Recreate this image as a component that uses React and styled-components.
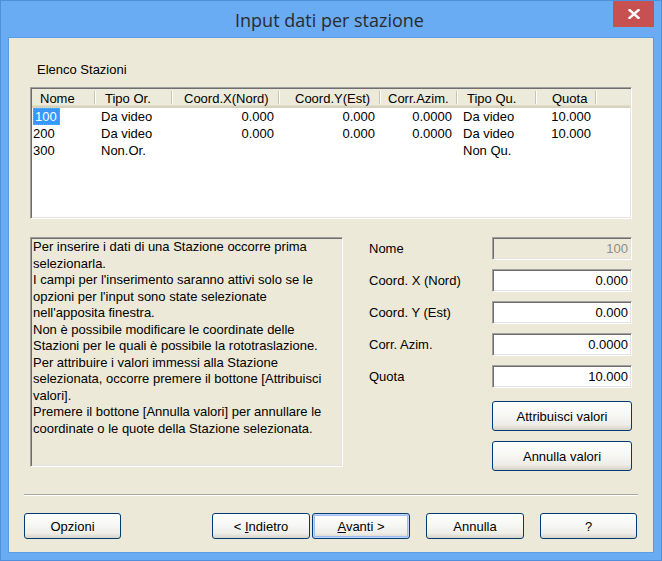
import React from "react";
import styled, { createGlobalStyle, css } from "styled-components";

const GlobalStyle = createGlobalStyle`
  html, body { margin: 0; padding: 0; background: #6aacf4; }
  * { box-sizing: border-box; }
`;

const FONT = `"Liberation Sans", Arial, sans-serif`;
const BEIGE = "#ece9d8";

const Window = styled.div`
  width: 662px;
  height: 561px;
  border: 1px solid #4f8fdb;
  background: #6aacf4;
  display: flex;
  flex-direction: column;
  font-family: ${FONT};
  font-size: 13px;
  color: #000;
`;

const TitleBar = styled.div`
  height: 36px;
  display: grid;
  grid-template-columns: 1fr auto 1fr;
  align-items: start;
  padding-right: 7px;
`;

const Title = styled.div`
  grid-column: 2;
  font-family: "Open Sans", "Noto Sans", sans-serif;
  font-size: 18px;
  line-height: 24px;
  margin-top: 7px;
  margin-left: 4px;
  color: #2b2b2b;
  white-space: nowrap;
`;

const CloseButton = styled.div`
  grid-column: 3;
  justify-self: end;
  width: 41px;
  height: 26px;
  background: #c75050;
  display: flex;
  align-items: center;
  justify-content: center;
`;

const Client = styled.div`
  flex: 1;
  margin: 0 7px 7px 7px;
  border: 1px solid #5b9be4;
  background: ${BEIGE};
  display: flex;
  flex-direction: column;
  padding-bottom: 13px;
`;

const SectionLabel = styled.div`
  margin: 24px 0 10px 28px;
  line-height: 15px;
`;

const ListView = styled.div`
  margin-left: 21px;
  width: 602px;
  height: 132px;
  background: #fff;
  border-style: solid;
  border-width: 1px;
  border-color: #a0a0a0 #ffffff #ffffff #a0a0a0;
  box-shadow: inset 1px 1px 0 #6e6e6e, inset -1px -1px 0 #e3e3e3;
  padding: 1px;
  display: flex;
  flex-direction: column;
`;

const HeaderRow = styled.div`
  display: flex;
  background: #ebeadb;
  padding-top: 2px;
  height: 19px;
  border-bottom: 2px solid #d6d2bd;
  box-shadow: 0 -1px 0 #e2dec9 inset;
`;

const HeaderCell = styled.div`
  position: relative;
  width: ${(p) => p.$w}px;
  flex: none;
  padding-left: ${(p) => p.$pad}px;
  line-height: 15px;
  white-space: nowrap;
  &::after {
    content: "";
    position: absolute;
    right: 0;
    top: 0;
    width: 1px;
    height: 13px;
    background: #c7c5b2;
    box-shadow: 1px 0 0 #fff;
  }
`;

const Row = styled.div`
  display: flex;
  height: 17px;
  line-height: 17px;
`;

const Cell = styled.div`
  width: ${(p) => p.$w}px;
  flex: none;
  white-space: nowrap;
  text-align: ${(p) => p.$align};
  ${(p) =>
    p.$align === "right"
      ? css`padding-right: ${p.$pad}px;`
      : css`padding-left: ${p.$pad}px;`}
`;

const Selected = styled.span`
  display: inline-block;
  height: 17px;
  line-height: 15px;
  padding: 0 2px 0 1px;
  background: #3399ff;
  color: #fff;
  border: 1px dotted #d9954d;
`;

const MiddleRow = styled.div`
  display: flex;
  margin: 18px 21px 0 21px;
  height: 230px;
  gap: 26px;
`;

const HelpBox = styled.div`
  width: 313px;
  height: 230px;
  border-style: solid;
  border-width: 1px;
  border-color: #a0a0a0 #ffffff #ffffff #a0a0a0;
  box-shadow: inset 1px 1px 0 #6e6e6e, inset -1px -1px 0 #e3e3e3;
  padding: 1px 0 0 2px;
  line-height: 16.5px;
`;

const HelpLine = styled.div`
  white-space: nowrap;
`;

const FieldsColumn = styled.div`
  flex: 1;
  display: flex;
  flex-direction: column;
  gap: 9px;
`;

const FieldRow = styled.div`
  display: flex;
  align-items: center;
  height: 23px;
`;

const FieldLabel = styled.div`
  width: 123px;
  flex: none;
  white-space: nowrap;
`;

const TextBox = styled.div`
  width: 140px;
  height: 23px;
  border-style: solid;
  border-width: 1px;
  border-color: #a0a0a0 #ffffff #ffffff #a0a0a0;
  box-shadow: inset 1px 1px 0 #6e6e6e, inset -1px -1px 0 #e3e3e3;
  background: ${(p) => (p.$disabled ? BEIGE : "#fff")};
  color: ${(p) => (p.$disabled ? "#8d8d8d" : "#000")};
  text-align: right;
  padding-right: 3px;
  line-height: 21px;
`;

const ActionStack = styled.div`
  display: flex;
  flex-direction: column;
  gap: 10px;
  margin: 4px 0 0 123px;
`;

const PushButton = styled.div`
  width: ${(p) => p.$w || 98}px;
  height: ${(p) => p.$h || 26}px;
  flex: none;
  border: 1px solid #003c74;
  border-radius: 3px;
  background: linear-gradient(180deg, #ffffff 0%, #f7f7f4 45%, #eeede7 80%, #d8d3c8 100%);
  display: flex;
  align-items: center;
  justify-content: center;
  white-space: pre;
  ${(p) =>
    p.$default &&
    css`
      box-shadow: inset 0 0 0 1px #c2d6f7, inset 0 0 0 2px #9dbcf1;
    `}
`;

const Separator = styled.div`
  margin: 27px 15px 0 15px;
  height: 2px;
  border-top: 1px solid #aca899;
  border-bottom: 1px solid #fff;
`;

const Footer = styled.div`
  display: flex;
  margin-top: 17px;
  padding: 0 16px 0 15px;
`;

const ButtonGroup = styled.div`
  display: flex;
  margin-left: auto;
  gap: 2px;
  & > :nth-child(3), & > :nth-child(4) { margin-left: 14px; }
`;

const columns = [
  { key: "nome", label: "Nome", w: 63, hp: 8, align: "left", dp: 1 },
  { key: "tipoOr", label: "Tipo Or.", w: 77, hp: 10, align: "left", dp: 6 },
  { key: "x", label: "Coord.X(Nord)", w: 107, hp: 12, align: "right", dp: 5 },
  { key: "y", label: "Coord.Y(Est)", w: 101, hp: 16, align: "right", dp: 5 },
  { key: "az", label: "Corr.Azim.", w: 77, hp: 8, align: "right", dp: 5 },
  { key: "tipoQu", label: "Tipo Qu.", w: 79, hp: 10, align: "left", dp: 6 },
  { key: "quota", label: "Quota", w: 60, hp: 16, align: "right", dp: 5 },
];

const rows = [
  { nome: "100", tipoOr: "Da video", x: "0.000", y: "0.000", az: "0.0000", tipoQu: "Da video", quota: "10.000", selected: true },
  { nome: "200", tipoOr: "Da video", x: "0.000", y: "0.000", az: "0.0000", tipoQu: "Da video", quota: "10.000" },
  { nome: "300", tipoOr: "Non.Or.", x: "", y: "", az: "", tipoQu: "Non Qu.", quota: "" },
];

const helpLines = [
  "Per inserire i dati di una Stazione occorre prima",
  "selezionarla.",
  "I campi per l'inserimento saranno attivi solo se le",
  "opzioni per l'input sono state selezionate",
  "nell'apposita finestra.",
  "Non è possibile modificare le coordinate delle",
  "Stazioni per le quali è possibile la rototraslazione.",
  "Per attribuire i valori immessi alla Stazione",
  "selezionata, occorre premere il bottone [Attribuisci",
  "valori].",
  "Premere il bottone [Annulla valori] per annullare le",
  "coordinate o le quote della Stazione selezionata.",
];

const fields = [
  { label: "Nome", value: "100", disabled: true },
  { label: "Coord. X (Nord)", value: "0.000" },
  { label: "Coord. Y (Est)", value: "0.000" },
  { label: "Corr. Azim.", value: "0.0000" },
  { label: "Quota", value: "10.000" },
];

export default function App() {
  return (
    <>
      <GlobalStyle />
      <Window>
        <TitleBar>
          <Title>Input dati per stazione</Title>
          <CloseButton>
            <svg width="12" height="10" viewBox="0 0 12 10">
              <path d="M1.5 1 L10.5 9 M10.5 1 L1.5 9" stroke="#fff" strokeWidth="2.4" strokeLinecap="square" />
            </svg>
          </CloseButton>
        </TitleBar>
        <Client>
          <SectionLabel>Elenco Stazioni</SectionLabel>
          <ListView>
            <HeaderRow>
              {columns.map((c) => (
                <HeaderCell key={c.key} $w={c.w} $pad={c.hp}>
                  {c.label}
                </HeaderCell>
              ))}
            </HeaderRow>
            {rows.map((r) => (
              <Row key={r.nome}>
                {columns.map((c) => (
                  <Cell key={c.key} $w={c.w} $align={c.align} $pad={c.dp}>
                    {c.key === "nome" && r.selected ? <Selected>{r[c.key]}</Selected> : r[c.key]}
                  </Cell>
                ))}
              </Row>
            ))}
          </ListView>
          <MiddleRow>
            <HelpBox>
              {helpLines.map((l, i) => (
                <HelpLine key={i}>{l}</HelpLine>
              ))}
            </HelpBox>
            <FieldsColumn>
              {fields.map((f) => (
                <FieldRow key={f.label}>
                  <FieldLabel>{f.label}</FieldLabel>
                  <TextBox $disabled={f.disabled}>{f.value}</TextBox>
                </FieldRow>
              ))}
              <ActionStack>
                <PushButton $w={140} $h={30}>Attribuisci valori</PushButton>
                <PushButton $w={140} $h={30}>Annulla valori</PushButton>
              </ActionStack>
            </FieldsColumn>
          </MiddleRow>
          <Separator />
          <Footer>
            <PushButton $w={97}>Opzioni</PushButton>
            <ButtonGroup>
              <PushButton>
                <span>{"< "}<u>I</u>ndietro</span>
              </PushButton>
              <PushButton $default>
                <span><u>A</u>{"vanti >"}</span>
              </PushButton>
              <PushButton>Annulla</PushButton>
              <PushButton $w={97}>?</PushButton>
            </ButtonGroup>
          </Footer>
        </Client>
      </Window>
    </>
  );
}
